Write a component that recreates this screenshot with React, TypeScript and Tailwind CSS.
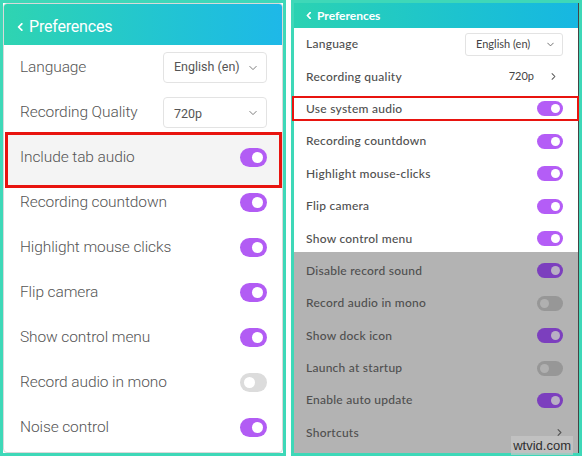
import React from 'react'

const leftRows: { label: string; on: boolean }[] = [
  { label: 'Recording countdown', on: true },
  { label: 'Highlight mouse clicks', on: true },
  { label: 'Flip camera', on: true },
  { label: 'Show control menu', on: true },
  { label: 'Record audio in mono', on: false },
  { label: 'Noise control', on: true },
]

const rightRows: { label: string; on: boolean }[] = [
  { label: 'Recording countdown', on: true },
  { label: 'Highlight mouse-clicks', on: true },
  { label: 'Flip camera', on: true },
  { label: 'Show control menu', on: true },
]

const dimRows: { label: string; on: boolean }[] = [
  { label: 'Disable record sound', on: true },
  { label: 'Record audio in mono', on: false },
  { label: 'Show dock icon', on: true },
  { label: 'Launch at startup', on: false },
  { label: 'Enable auto update', on: true },
]

function Chevron({ dir, className }: { dir: 'left' | 'down' | 'right'; className?: string }) {
  const d = dir === 'left' ? 'M6 1 L2 5 L6 9' : dir === 'down' ? 'M1 3 L5 7 L9 3' : 'M3 1 L7 5 L3 9'
  return (
    <svg viewBox="0 0 10 10" className={className} fill="none" stroke="currentColor" strokeLinecap="round" strokeLinejoin="round">
      <path d={d} />
    </svg>
  )
}

function BigToggle({ on }: { on: boolean }) {
  return (
    <div
      className={`w-[27px] h-[19px] rounded-full flex items-center px-[4px] ${
        on ? 'bg-[#b25cf4] justify-end' : 'bg-[#dcdcdc] justify-start'
      }`}
    >
      <div className="w-[11px] h-[11px] rounded-full bg-white" />
    </div>
  )
}

function SmallToggle({ on, dim }: { on: boolean; dim?: boolean }) {
  const bg = on ? (dim ? 'bg-[#7c3fbe]' : 'bg-[#b45df6]') : 'bg-[#979797]'
  const knob = on ? (dim ? 'bg-[#b9b0c4]' : 'bg-white') : 'bg-[#b0b0b0]'
  return (
    <div className={`w-[26px] h-[15px] rounded-full flex items-center px-[3px] ${bg} ${on ? 'justify-end' : 'justify-start'}`}>
      <div className={`w-[9px] h-[9px] rounded-full ${knob}`} />
    </div>
  )
}

function LeftPanel() {
  return (
    <div className="w-[286px] h-full border-[3px] border-[#3ed8b8] flex flex-col bg-white">
      <div className="flex-1 flex flex-col rounded-[4px] border border-[#d9d9d9] overflow-hidden font-['Roboto',sans-serif]">
        <div className="h-[41px] shrink-0 flex items-center px-[13px] pt-[4px] gap-[4px] bg-gradient-to-r from-[#2fd4b1] to-[#1eb8e8] text-white">
          <Chevron dir="left" className="w-[8px] h-[8px] stroke-[2.2]" />
          <span className="text-[16px] font-normal tracking-[-0.2px]">Preferences</span>
        </div>

        <div className="h-[45px] flex items-center justify-between pl-[16px] pr-[15px]">
          <span className="text-[15.5px] text-[#555] font-light tracking-[-0.1px]">Language</span>
          <div className="w-[104px] h-[31px] rounded-[4px] border border-[#e3e3e3] flex items-center justify-between pl-[10px] pr-[9px]">
            <span className="text-[12.5px] text-[#555]">English (en)</span>
            <Chevron dir="down" className="w-[8px] h-[8px] text-[#777] stroke-[1.2]" />
          </div>
        </div>
        <div className="h-[45px] flex items-center justify-between pl-[16px] pr-[15px]">
          <span className="text-[15.5px] text-[#555] font-light tracking-[-0.1px]">Recording Quality</span>
          <div className="w-[104px] h-[31px] rounded-[4px] border border-[#e3e3e3] flex items-center justify-between pl-[10px] pr-[9px]">
            <span className="text-[12.5px] text-[#555] mt-[4px]">720p</span>
            <Chevron dir="down" className="w-[8px] h-[8px] text-[#777] stroke-[1.2]" />
          </div>
        </div>
        <div className="h-[45px] relative flex items-center justify-between pl-[16px] pr-[15px]">
          <div className="absolute left-[1px] right-0 top-[-3px] bottom-[-8px] border-[3px] border-[#e8140f] bg-[#f4f4f4]" />
          <span className="relative text-[15.5px] text-[#555] font-light tracking-[-0.1px]">Include tab audio</span>
          <div className="relative">
            <BigToggle on />
          </div>
        </div>
        {leftRows.map((r) => (
          <div key={r.label} className="h-[45px] flex items-center justify-between pl-[16px] pr-[15px]">
            <span className="text-[15.5px] text-[#555] font-light tracking-[-0.1px]">{r.label}</span>
            <BigToggle on={r.on} />
          </div>
        ))}
      </div>
    </div>
  )
}

function RightRow({ label, children }: { label: string; children?: React.ReactNode }) {
  return (
    <div className="h-[32.4px] flex items-center justify-between pl-[12px] pr-[15px]">
      <span className="text-[12px] text-[#4f4f4f] font-medium tracking-[0.25px]">{label}</span>
      {children}
    </div>
  )
}

function RightPanel() {
  return (
    <div className="flex-1 h-full border-[3px] border-[#3ed8b8] flex flex-col bg-white relative">
      <div className="flex-1 flex flex-col border-r border-[#444] font-['Lato',sans-serif]">
        <div className="h-[25px] shrink-0 flex items-center px-[12px] gap-[4px] bg-gradient-to-r from-[#2bd2b2] to-[#17b7e2] text-white">
          <Chevron dir="left" className="w-[7px] h-[7px] stroke-[2.4]" />
          <span className="text-[12px] font-bold">Preferences</span>
        </div>
        <RightRow label="Language">
          <div className="w-[98px] h-[23px] rounded-[3px] border border-[#e3e3e3] flex items-center justify-between pl-[10px] pr-[8px]">
            <span className="text-[11px] text-[#444]">English (en)</span>
            <Chevron dir="down" className="w-[7px] h-[7px] text-[#666] stroke-[1.3]" />
          </div>
        </RightRow>
        <RightRow label="Recording quality">
          <div className="flex items-center gap-[16px] pr-[6px]">
            <span className="text-[11px] text-[#444]">720p</span>
            <Chevron dir="right" className="w-[7px] h-[7px] text-[#555] stroke-[1.5]" />
          </div>
        </RightRow>
        <div className="h-[32.4px] relative flex items-center justify-between pl-[12px] pr-[15px]">
          <div className="absolute left-[-2px] right-[-1px] top-[3px] bottom-[4px] border-[2px] border-[#e8140f]" />
          <span className="text-[12px] text-[#4f4f4f] font-medium tracking-[0.25px]">Use system audio</span>
          <SmallToggle on />
        </div>
        {rightRows.map((r) => (
          <RightRow key={r.label} label={r.label}>
            <SmallToggle on={r.on} />
          </RightRow>
        ))}
        <div className="flex-1 bg-[#b3b3b3] mt-[-3px] pt-[3px]">
          {dimRows.map((r) => (
            <RightRow key={r.label} label={r.label}>
              <SmallToggle on={r.on} dim />
            </RightRow>
          ))}
          <RightRow label="Shortcuts">
            <Chevron dir="right" className="w-[7px] h-[7px] text-[#555] stroke-[1.6]" />
          </RightRow>
        </div>
      </div>
      <div className="absolute right-[6px] bottom-[-2px] px-[2px] bg-[#c8c8c8]/70 text-[13px] text-[#2f2f2f] font-['Liberation_Sans',sans-serif]">
        wtvid.com
      </div>
    </div>
  )
}

export default function App() {
  return (
    <div className="w-[582px] h-[456px] flex gap-[5px] bg-white overflow-hidden">
      <LeftPanel />
      <RightPanel />
    </div>
  )
}
